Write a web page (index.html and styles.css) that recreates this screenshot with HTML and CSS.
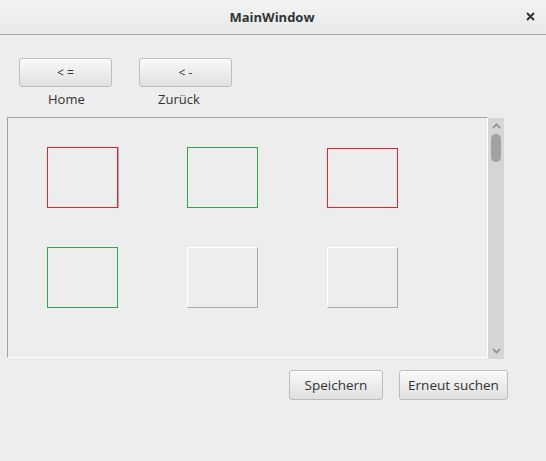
FILE: index.html
```html
<!DOCTYPE html>
<html>
<head>
<meta charset="utf-8">
<link rel="stylesheet" href="styles.css">
</head>
<body>
<div class="window">
  <div class="titlebar">
    <div class="title">MainWindow</div>
    <svg class="close" width="9" height="9" viewBox="0 0 9 9"><path d="M1 1 L8 8 M8 1 L1 8" stroke="#2e3436" stroke-width="2" stroke-linecap="butt"/></svg>
  </div>
  <div class="nav">
    <div class="navitem">
      <button class="btn navbtn">&lt; =</button>
      <div class="navlabel home">Home</div>
    </div>
    <div class="navitem">
      <button class="btn navbtn">&lt; -</button>
      <div class="navlabel back">Zurück</div>
    </div>
  </div>
  <div class="scrollwrap">
    <div class="pane">
      <div class="grid">
        <div class="box red shadow"></div>
        <div class="box green"></div>
        <div class="box red small"></div>
        <div class="box green"></div>
        <div class="box raised"></div>
        <div class="box raised"></div>
      </div>
    </div>
    <div class="scrollbar">
      <svg class="arrow" width="9" height="6" viewBox="0 0 9 6"><path d="M1 5 L4.5 1.5 L8 5" fill="none" stroke="#8a8a8a" stroke-width="1.6"/></svg>
      <div class="thumb"></div>
      <div class="spacer"></div>
      <svg class="arrow" width="9" height="6" viewBox="0 0 9 6"><path d="M1 1 L4.5 4.5 L8 1" fill="none" stroke="#8a8a8a" stroke-width="1.6"/></svg>
    </div>
  </div>
  <div class="actions">
    <button class="btn save">Speichern</button>
    <button class="btn search">Erneut suchen</button>
  </div>
</div>
</body>
</html>
```

FILE: styles.css
```css
html, body {
  margin: 0;
  padding: 0;
}
body {
  width: 546px;
  height: 461px;
  background: #ededed;
  font-family: "Open Sans", "DejaVu Sans", sans-serif;
  color: #333333;
  overflow: hidden;
}
.window {
  display: flex;
  flex-direction: column;
  height: 461px;
}
.titlebar {
  height: 34px;
  border-bottom: 1px solid #a6a6a6;
  background: linear-gradient(#f3f3f3, #e9e9e9);
  display: flex;
  align-items: center;
  justify-content: center;
  position: relative;
}
.title {
  font-weight: bold;
  font-size: 13px;
  color: #2e3436;
  margin-left: -2px;
  margin-top: -1px;
}
.close {
  position: absolute;
  left: 526px;
  top: 12px;
}
.nav {
  display: flex;
  gap: 27px;
  padding-left: 19px;
  margin-top: 23px;
}
.navitem {
  display: flex;
  flex-direction: column;
  align-items: flex-start;
}
.btn {
  font-family: "Open Sans", "DejaVu Sans", sans-serif;
  font-size: 13.5px;
  color: #333333;
  height: 30px;
  border: 1px solid #bdbdbd;
  border-radius: 3px;
  background: linear-gradient(#f9f9f9, #e0e0e0);
  padding: 0;
  margin: 0;
  box-sizing: border-box;
  box-shadow: inset 0 1px 0 #ffffff;
}
.navbtn {
  width: 93px;
  height: 29px;
  font-size: 12px;
}
.navlabel {
  font-size: 13px;
  line-height: 20px;
  margin-top: 2px;
  color: #333333;
}
.home {
  margin-left: 29px;
}
.back {
  margin-left: 19px;
}
.scrollwrap {
  display: flex;
  margin-left: 7px;
  margin-top: 8px;
}
.pane {
  width: 481px;
  height: 241px;
  box-sizing: border-box;
  border-top: 1px solid #a3a3a3;
  border-left: 1px solid #a3a3a3;
  border-right: 1px solid #ffffff;
  border-bottom: 1px solid #ffffff;
}
.grid {
  display: grid;
  grid-template-columns: 71px 71px 71px;
  grid-auto-rows: 61px;
  column-gap: 69px;
  row-gap: 39px;
  padding-left: 39px;
  padding-top: 29px;
}
.box {
  box-sizing: border-box;
  width: 71px;
  height: 61px;
  border: 1px solid #a8a8a8;
}
.red {
  border: 1px solid #e8222b;
}
.green {
  border: 1px solid #2ea650;
}
.shadow {
  box-shadow: 1px 0 0 #a8a8a8;
}
.small {
  margin-top: 1px;
  height: 60px;
}
.raised {
  border-top: 1px solid #ffffff;
  border-left: 1px solid #ffffff;
  border-right: 1px solid #a8a8a8;
  border-bottom: 1px solid #a8a8a8;
}
.scrollbar {
  width: 16px;
  height: 241px;
  margin-top: 1px;
  background: #d5d5d5;
  display: flex;
  flex-direction: column;
  align-items: center;
  box-sizing: border-box;
  padding-top: 5px;
  padding-bottom: 5px;
}
.arrow {
  flex: none;
}
.thumb {
  width: 10px;
  height: 28px;
  margin-top: 5px;
  border-radius: 5px;
  background: #a2a2a2;
}
.spacer {
  flex: 1;
}
.actions {
  display: flex;
  justify-content: flex-end;
  gap: 16px;
  padding-right: 38px;
  margin-top: 11px;
}
.save {
  width: 94px;
}
.search {
  width: 109px;
}
```
